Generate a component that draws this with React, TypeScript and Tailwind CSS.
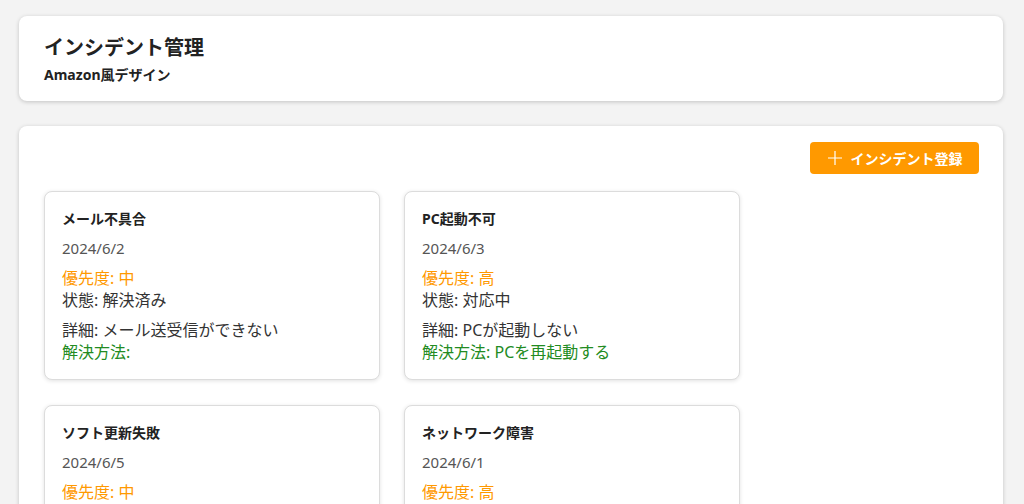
import React from "react";

type Incident = {
  title: string;
  date: string;
  priority: string;
  status: string;
  detail: string;
  solution: string;
};

const incidents: Incident[] = [
  { title: "メール不具合", date: "2024/6/2", priority: "中", status: "解決済み", detail: "メール送受信ができない", solution: "" },
  { title: "PC起動不可", date: "2024/6/3", priority: "高", status: "対応中", detail: "PCが起動しない", solution: "PCを再起動する" },
  { title: "ソフト更新失敗", date: "2024/6/5", priority: "中", status: "未対応", detail: "ソフトウェアの更新に失敗する", solution: "" },
  { title: "ネットワーク障害", date: "2024/6/1", priority: "高", status: "対応中", detail: "ネットワークに接続できない", solution: "" },
];

function Card({ it }: { it: Incident }) {
  return (
    <div className="w-[336px] rounded-lg border border-[#dcdcdc] bg-white px-[17px] pt-4 pb-4 shadow-[0_1px_4px_rgba(0,0,0,0.12)]">
      <div className="text-[14px] font-bold leading-[22px] text-[#222]">{it.title}</div>
      <div className="mt-[7px] text-[15px] leading-[22px] text-[#555]">{it.date}</div>
      <div className="mt-2 text-[16px] leading-[22px] text-[#ff9900]">優先度: {it.priority}</div>
      <div className="text-[16px] leading-[22px] text-[#333]">状態: {it.status}</div>
      <div className="mt-2 text-[16px] leading-[22px] text-[#333]">詳細: {it.detail}</div>
      <div className="text-[16px] leading-[22px] text-[#228b22]">解決方法: {it.solution}</div>
    </div>
  );
}

export default function App() {
  return (
    <div
      className="min-h-screen bg-[#f3f3f3] pl-[19px] pr-[21px] pt-4 pb-6"
      style={{ fontFamily: '"Noto Sans", "Noto Sans CJK JP", sans-serif' }}
    >
      <div className="rounded-lg bg-white pl-[25px] pr-6 pt-[18px] pb-4 shadow-[0_1px_4px_rgba(0,0,0,0.2)]">
        <div className="text-[20px] font-bold leading-[28px] text-[#222]">インシデント管理</div>
        <div className="mt-[3px] text-[14px] font-bold leading-[20px] text-[#222]">Amazon風デザイン</div>
      </div>
      <div className="mt-[25px] rounded-lg bg-white pl-[25px] pr-6 pt-4 pb-6 shadow-[0_1px_4px_rgba(0,0,0,0.2)]">
        <div className="flex justify-end">
          <button className="flex h-8 w-[169px] items-center justify-center gap-2 rounded bg-[#ff9900] text-[14px] font-bold text-white">
            <svg width="16" height="16" viewBox="0 0 16 16" fill="none" stroke="white" strokeWidth="1.2">
              <path d="M8 1v14M1 8h14" />
            </svg>
            インシデント登録
          </button>
        </div>
        <div className="mt-[17px] grid grid-cols-[336px_336px] gap-x-6 gap-y-[25px]">
          {incidents.map((it) => (
            <Card key={it.title} it={it} />
          ))}
        </div>
      </div>
    </div>
  );
}
